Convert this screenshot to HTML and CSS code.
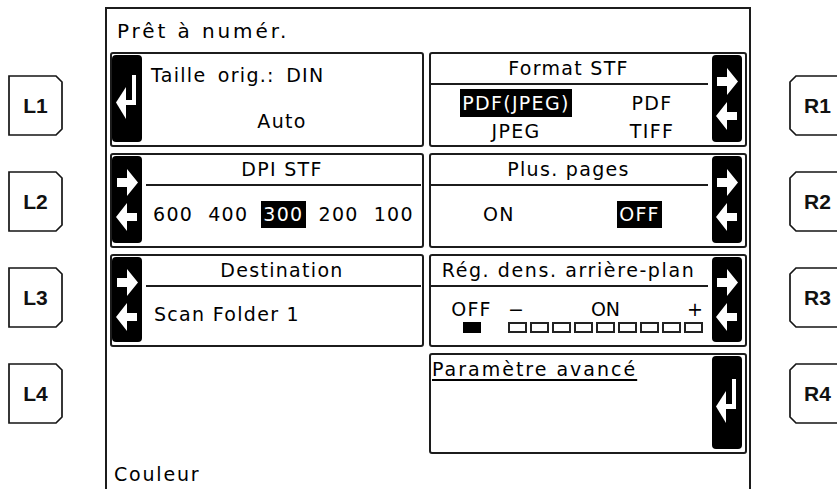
FILE: index.html
```html
<!DOCTYPE html>
<html lang="fr">
<head>
<meta charset="utf-8">
<title>Prêt à numér.</title>
<link rel="stylesheet" href="styles.css">
</head>
<body>
<div class="device">
  <div class="keys keys-left">
    <div class="key"><svg width="55" height="61" viewBox="0 0 55 61"><polygon points="1,1 48,1 54,7 54,54 48,60 1,60" /></svg><span>L1</span></div>
    <div class="key"><svg width="55" height="61" viewBox="0 0 55 61"><polygon points="1,1 48,1 54,7 54,54 48,60 1,60" /></svg><span>L2</span></div>
    <div class="key"><svg width="55" height="61" viewBox="0 0 55 61"><polygon points="1,1 48,1 54,7 54,54 48,60 1,60" /></svg><span>L3</span></div>
    <div class="key"><svg width="55" height="61" viewBox="0 0 55 61"><polygon points="1,1 48,1 54,7 54,54 48,60 1,60" /></svg><span>L4</span></div>
  </div>

  <div class="screen">
    <div class="title">Prêt à numér.</div>
    <div class="grid">
      <!-- L1 -->
      <div class="panel left">
        <div class="btn"><svg width="30" height="87" viewBox="0 0 30 87"><path d="M20 20h4v30h-10v-5h6z"/><polygon points="4,47.5 14,32 14,64"/></svg></div>
        <div class="content orig">
          <div class="orig-line">Taille orig.: DIN</div>
          <div class="orig-val">Auto</div>
        </div>
      </div>
      <!-- R1 -->
      <div class="panel right">
        <div class="content">
          <div class="hdr">Format STF</div>
          <div class="sep"></div>
          <div class="fmt">
            <span class="hl">PDF(JPEG)</span>
            <span>PDF</span>
            <span>JPEG</span>
            <span>TIFF</span>
          </div>
        </div>
        <div class="btn"><svg width="30" height="87" viewBox="0 0 30 87"><path d="M5 22H15V13L26 26.5L15 40V31H5Z"/><path d="M25 57H15V47L4 61L15 75V65H25Z"/></svg></div>
      </div>
      <!-- L2 -->
      <div class="panel left">
        <div class="btn"><svg width="30" height="87" viewBox="0 0 30 87"><path d="M5 22H15V13L26 26.5L15 40V31H5Z"/><path d="M25 57H15V47L4 61L15 75V65H25Z"/></svg></div>
        <div class="content">
          <div class="hdr">DPI STF</div>
          <div class="sep"></div>
          <div class="body vals">
            <span>600</span><span>400</span><span class="hl">300</span><span>200</span><span>100</span>
          </div>
        </div>
      </div>
      <!-- R2 -->
      <div class="panel right">
        <div class="content">
          <div class="hdr">Plus. pages</div>
          <div class="sep"></div>
          <div class="body onoff">
            <span>ON</span>
            <span class="hl">OFF</span>
          </div>
        </div>
        <div class="btn"><svg width="30" height="87" viewBox="0 0 30 87"><path d="M5 22H15V13L26 26.5L15 40V31H5Z"/><path d="M25 57H15V47L4 61L15 75V65H25Z"/></svg></div>
      </div>
      <!-- L3 -->
      <div class="panel left">
        <div class="btn"><svg width="30" height="87" viewBox="0 0 30 87"><path d="M5 22H15V13L26 26.5L15 40V31H5Z"/><path d="M25 57H15V47L4 61L15 75V65H25Z"/></svg></div>
        <div class="content">
          <div class="hdr">Destination</div>
          <div class="sep"></div>
          <div class="body dest">Scan Folder 1</div>
        </div>
      </div>
      <!-- R3 -->
      <div class="panel right">
        <div class="content">
          <div class="hdr hdr-wide">Rég. dens. arrière-plan</div>
          <div class="sep"></div>
          <div class="dens">
            <div class="dens-row">
              <span class="dens-off">OFF</span>
              <span class="dens-scale"><span>−</span><span>ON</span><span>+</span></span>
            </div>
            <div class="dens-bar">
              <span class="dens-cur"><span class="sq-fill"></span></span>
              <span class="sqs">
                <span class="sq"></span><span class="sq"></span><span class="sq"></span>
                <span class="sq"></span><span class="sq"></span><span class="sq"></span>
                <span class="sq"></span><span class="sq"></span><span class="sq"></span>
              </span>
            </div>
          </div>
        </div>
        <div class="btn"><svg width="30" height="87" viewBox="0 0 30 87"><path d="M5 22H15V13L26 26.5L15 40V31H5Z"/><path d="M25 57H15V47L4 61L15 75V65H25Z"/></svg></div>
      </div>
      <!-- R4 -->
      <div class="panel right r4">
        <div class="content">
          <div class="adv">Paramètre avancé</div>
        </div>
        <div class="btn"><svg width="30" height="87" viewBox="0 0 30 87"><path d="M20 20h4v30h-10v-5h6z"/><polygon points="4,47.5 14,32 14,64"/></svg></div>
      </div>
    </div>
    <div class="status">Couleur</div>
  </div>

  <div class="keys keys-right">
    <div class="key key-r"><svg width="55" height="61" viewBox="0 0 55 61"><polygon points="7,1 54,1 54,60 7,60 1,54 1,7" /></svg><span>R1</span></div>
    <div class="key key-r"><svg width="55" height="61" viewBox="0 0 55 61"><polygon points="7,1 54,1 54,60 7,60 1,54 1,7" /></svg><span>R2</span></div>
    <div class="key key-r"><svg width="55" height="61" viewBox="0 0 55 61"><polygon points="7,1 54,1 54,60 7,60 1,54 1,7" /></svg><span>R3</span></div>
    <div class="key key-r"><svg width="55" height="61" viewBox="0 0 55 61"><polygon points="7,1 54,1 54,60 7,60 1,54 1,7" /></svg><span>R4</span></div>
  </div>
</div>
</body>
</html>
```

FILE: styles.css
```css
* { box-sizing: border-box; }
html, body { margin: 0; padding: 0; }
body {
  width: 837px;
  height: 489px;
  overflow: hidden;
  background: #fff;
  color: #000;
  font-family: "DejaVu Sans", "Noto Sans", sans-serif;
  font-size: 19px;
  letter-spacing: 1.3px;
}
.device {
  display: flex;
  align-items: flex-start;
  height: 489px;
}

/* side keys */
.keys {
  flex: none;
  display: flex;
  flex-direction: column;
  gap: 35px;
  padding-top: 75px;
}
.keys-left { padding-left: 8px; }
.keys-right { margin-left: 38px; }
.key {
  position: relative;
  width: 55px;
  height: 61px;
  display: flex;
  align-items: center;
  justify-content: center;
  font-family: "Liberation Sans", Arial, sans-serif;
  font-weight: bold;
  font-size: 21px;
  letter-spacing: 0;
  color: #111;
}
.key svg { position: absolute; left: 0; top: 0; }
.key polygon { fill: none; stroke: #151515; stroke-width: 1.7; }
.key span { position: relative; }
.key-r span { left: 1px; }

/* LCD screen */
.screen {
  flex: none;
  margin-left: 42px;
  margin-top: 7px;
  width: 646px;
  height: 500px;
  border: 2px solid #1c1c1c;
  border-bottom: none;
}
.title {
  margin-top: 7px;
  height: 30px;
  line-height: 30px;
  padding-left: 10px;
  font-size: 20px;
  letter-spacing: 2.9px;
}
.grid {
  display: grid;
  grid-template-columns: 314px 318px;
  grid-template-rows: 95px 95px 93px 101px;
  column-gap: 5px;
  row-gap: 6px;
  margin: 6px 0 0 3px;
}
.panel {
  display: flex;
  border: 2px solid #1c1c1c;
  border-radius: 3px;
  min-width: 0;
}
.r4 { grid-column: 2; grid-row: 4; }
.btn {
  flex: none;
  width: 30px;
  margin: 1px 0 3px;
  background: #000;
  border-radius: 4px;
  display: flex;
  align-items: center;
  justify-content: center;
}
.panel.right .btn { margin-right: 3px; }
.btn svg { fill: #fff; display: block; }

.content {
  flex: 1;
  min-width: 0;
  display: flex;
  flex-direction: column;
}
.hdr {
  flex: none;
  height: 29px;
  line-height: 29px;
  text-align: center;
  white-space: nowrap;
}
.panel.right .hdr { padding-right: 6px; }
.sep {
  flex: none;
  height: 2px;
  background: #1c1c1c;
}
.panel.left .sep { margin: 0 1px 0 4px; }
.panel.right .sep { margin: 0 4px 0 0; }
.body {
  flex: 1;
  display: flex;
  align-items: center;
  padding-bottom: 4px;
}
.hl {
  background: #000;
  color: #fff;
  padding: 0 2px;
}

/* L1 */
.orig { padding: 9px 0 0 9px; }
.orig-line { line-height: 24px; word-spacing: 4px; }
.orig-val { margin-top: 22px; line-height: 24px; text-align: center; padding-right: 9px; }

/* R1 */
.fmt {
  display: grid;
  grid-template-columns: 170px 1fr;
  grid-auto-rows: 28px;
  padding: 4px 9px 0 0;
  justify-items: center;
  align-items: center;
  line-height: 28px;
}

/* L2 */
.vals { gap: 11px; padding-left: 9px; }
.vals span { padding: 0 2px; line-height: 27px; }

/* R2 */
.onoff {
  display: grid;
  grid-template-columns: 136px 1fr;
  justify-items: center;
}
.onoff span { line-height: 27px; padding: 0 2px; }

/* L3 */
.dest { padding-left: 12px; }

/* R3 */
.hdr-wide { letter-spacing: 1.6px; }
.dens { padding-top: 12px; }
.dens-row { display: flex; height: 20px; line-height: 20px; }
.dens-off { width: 77px; padding-left: 4px; text-align: center; }
.dens-scale { width: 195px; display: flex; justify-content: space-between; letter-spacing: 0; }
.dens-bar { display: flex; height: 11px; margin-top: 3px; }
.dens-cur { width: 77px; padding-left: 4px; display: flex; justify-content: center; }
.sq-fill { width: 18px; height: 11px; background: #000; }
.sqs { display: flex; gap: 3px; }
.sq { width: 19px; height: 11px; border: 2px solid #222; }

/* R4 */
.adv {
  padding: 2px 0 0 1px;
  line-height: 24px;
  letter-spacing: 2px;
  text-decoration: underline;
  text-decoration-thickness: 2px;
  text-underline-offset: 3px;
}

.status {
  margin-top: 8px;
  padding-left: 7px;
  line-height: 24px;
  letter-spacing: 1.8px;
}
```
